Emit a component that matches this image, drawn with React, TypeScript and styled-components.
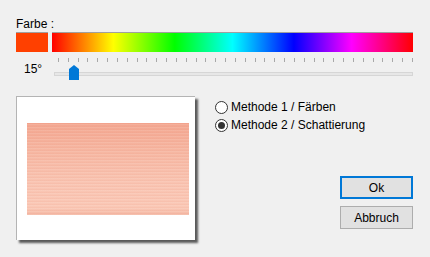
import styled, { createGlobalStyle } from "styled-components";

const GlobalStyle = createGlobalStyle`
    html, body {
        margin: 0;
        padding: 0;
        background: #f0f0f0;
    }
    body {
        font-family: "Liberation Sans", Arial, sans-serif;
        font-size: 12px;
        color: #000;
    }
`;

const Dialog = styled.div`
    width: 430px;
    height: 257px;
    box-sizing: border-box;
    padding: 17px 17px 0 16px;
    background: #f0f0f0;
    overflow: hidden;
`;

const Label = styled.div`
    height: 15px;
    line-height: 14px;
`;

const ColorRow = styled.div`
    display: flex;
    gap: 4px;
    height: 20px;
`;

const Swatch = styled.div<{ $color: string }>`
    width: 32px;
    background: ${p => p.$color};
    border-top: 1px solid #a0a0a0;
    box-sizing: border-box;
`;

const HueBar = styled.div`
    flex: 1;
    border-top: 1px solid #a0a0a0;
    box-sizing: border-box;
    background: linear-gradient(to right,
        #ff0000 0%, #ffff00 17%, #00ff00 34%, #00ffff 50%,
        #0000ff 67%, #ff00ff 83%, #ff0000 100%);
`;

const SliderRow = styled.div`
    display: flex;
    align-items: center;
    height: 30px;
`;

const AngleText = styled.div`
    width: 38px;
    padding-left: 8px;
    box-sizing: border-box;
    line-height: 14px;
    margin-top: 4px;
`;

const SliderBox = styled.div`
    position: relative;
    flex: 1;
    height: 30px;
`;

const Ticks = styled.div`
    display: flex;
    justify-content: space-between;
    margin: 6px 0 0 4px;
    height: 4px;
`;

const Tick = styled.span`
    width: 1px;
    height: 4px;
    background: #a8a8a8;
`;

const Track = styled.div`
    margin-top: 10px;
    height: 4px;
    background: #e7e7e7;
    border: 1px solid #d6d6d6;
    box-sizing: border-box;
`;

const Thumb = styled.svg`
    position: absolute;
    top: 13px;
`;

const Bottom = styled.div`
    display: flex;
    margin-top: 14px;
    height: 150px;
`;

const Preview = styled.div`
    width: 179px;
    height: 144px;
    box-sizing: border-box;
    background: #fff;
    border-top: 1px solid #b4b4b4;
    border-left: 1px solid #b4b4b4;
    box-shadow: 3px 3px 2px rgba(40, 40, 40, 0.75);
    padding: 26px 0 0 10px;
`;

const Stripes = styled.div`
    width: 162px;
    height: 92px;
    background:
        repeating-linear-gradient(to bottom,
            rgba(230, 140, 115, 0.10) 0px, rgba(230, 140, 115, 0.10) 1px,
            rgba(255, 240, 232, 0.12) 1px, rgba(255, 240, 232, 0.12) 2px,
            rgba(255, 255, 255, 0) 2px, rgba(255, 255, 255, 0) 3px),
        linear-gradient(to bottom, #f3a690 0%, #f6b6a1 30%, #f9c4b2 65%, #fac8b6 92%, #f4b8a4 100%);
`;

const Side = styled.div`
    flex: 1;
    display: flex;
    flex-direction: column;
    padding: 2px 0 0 20px;
`;

const Option = styled.label`
    display: flex;
    align-items: center;
    gap: 3px;
    height: 18px;
    white-space: nowrap;
`;

const Radio = styled.span<{ $checked?: boolean }>`
    width: 13px;
    height: 13px;
    box-sizing: border-box;
    border: 1px solid #333;
    border-radius: 50%;
    background: #fff;
    display: flex;
    align-items: center;
    justify-content: center;
    &::after {
        content: "";
        display: ${p => (p.$checked ? "block" : "none")};
        width: 7px;
        height: 7px;
        border-radius: 50%;
        background: #333;
    }
`;

const Buttons = styled.div`
    margin-top: auto;
    margin-bottom: 17px;
    align-self: flex-end;
    display: flex;
    flex-direction: column;
    gap: 7px;
`;

const Button = styled.button<{ $primary?: boolean }>`
    width: 73px;
    height: 23px;
    box-sizing: border-box;
    font: inherit;
    color: #000;
    background: #e1e1e1;
    border: ${p => (p.$primary ? "2px solid #0078d7" : "1px solid #adadad")};
    padding: 0;
`;

const TICKS = 37;
const angle = 15;

export default function App() {
    return (
        <Dialog>
            <GlobalStyle />
            <Label>Farbe :</Label>
            <ColorRow>
                <Swatch $color={`hsl(${angle}, 100%, 50%)`} />
                <HueBar />
            </ColorRow>
            <SliderRow>
                <AngleText>{angle}°</AngleText>
                <SliderBox>
                    <Ticks>
                        {Array.from({ length: TICKS }).map((_, i) => <Tick key={i} />)}
                    </Ticks>
                    <Track />
                    <Thumb width="10" height="15" viewBox="0 0 10 15"
                        style={{ left: `${(angle / 360) * 355}px` }}>
                        <path d="M5 0 L10 4 L10 15 L0 15 L0 4 Z" fill="#0078d7" />
                    </Thumb>
                </SliderBox>
            </SliderRow>
            <Bottom>
                <Preview>
                    <Stripes />
                </Preview>
                <Side>
                    <Option><Radio />Methode 1 / Färben</Option>
                    <Option><Radio $checked />Methode 2 / Schattierung</Option>
                    <Buttons>
                        <Button $primary>Ok</Button>
                        <Button>Abbruch</Button>
                    </Buttons>
                </Side>
            </Bottom>
        </Dialog>
    );
}
